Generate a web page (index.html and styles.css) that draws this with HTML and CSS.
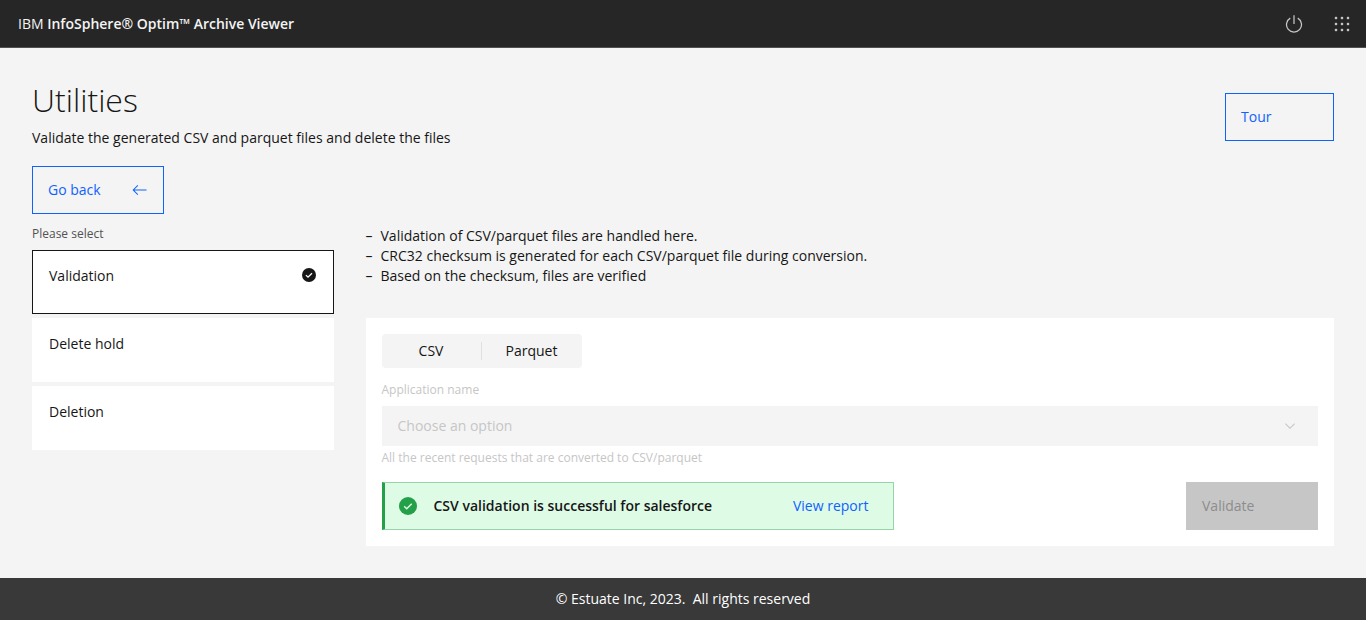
FILE: index.html
```html
<!DOCTYPE html>
<html lang="en">
<head>
<meta charset="utf-8">
<meta name="viewport" content="width=device-width, initial-scale=1">
<title>Utilities</title>
<link rel="stylesheet" href="styles.css">
</head>
<body>
<header class="topbar">
  <a class="brand" href="#">IBM <strong>InfoSphere® Optim™ Archive Viewer</strong></a>
  <div class="topbar-actions">
    <button class="icon-button" type="button" aria-label="Log out">
      <svg width="20" height="20" viewBox="0 0 32 32" fill="currentColor"><path d="M22.5 5.74l-1 1.73a11 11 0 1 1-11 0l-1-1.73a13 13 0 1 0 13 0Z"/><path d="M15 2h2v14h-2z"/></svg>
    </button>
    <button class="icon-button" type="button" aria-label="App switcher">
      <svg width="20" height="20" viewBox="0 0 20 20" fill="currentColor"><path d="M2 2h2v2H2zM8 2h2v2H8zM14 2h2v2h-2zM2 8h2v2H2zM8 8h2v2H8zM14 8h2v2h-2zM2 14h2v2H2zM8 14h2v2H8zM14 14h2v2h-2z" transform="translate(1 1)" stroke="currentColor" stroke-opacity=".35"/></svg>
    </button>
  </div>
</header>

<main class="page">
  <div class="page-head">
    <div class="page-title">
      <h1>Utilities</h1>
      <p>Validate the generated CSV and parquet files and delete the files</p>
    </div>
    <button class="button button-outline button-tour" type="button">Tour</button>
  </div>

  <button class="button button-outline button-back" type="button">
    Go back
    <svg width="16" height="16" viewBox="0 0 32 32" fill="currentColor"><path d="M14 26l1.41-1.41L7.83 17H32v-2H7.83l7.58-7.59L14 6 4 16z" transform="translate(-3 0)"/></svg>
  </button>

  <div class="columns">
    <fieldset class="tiles">
      <legend>Please select</legend>
      <label class="tile"><input type="radio" name="utility" checked><span>Validation</span>
        <svg class="tile-check" width="16" height="18" viewBox="0 0 16 18"><circle cx="8" cy="9" r="7" fill="#161616"/><path d="M4.9 9.1l2.1 2.1 4-4" fill="none" stroke="#fff" stroke-width="1.3"/></svg>
      </label>
      <label class="tile"><input type="radio" name="utility"><span>Delete hold</span></label>
      <label class="tile"><input type="radio" name="utility"><span>Deletion</span></label>
    </fieldset>

    <section class="content">
      <ul class="notes">
        <li>Validation of CSV/parquet files are handled here.</li>
        <li>CRC32 checksum is generated for each CSV/parquet file during conversion.</li>
        <li>Based on the checksum, files are verified</li>
      </ul>

      <div class="panel">
        <div class="switch">
          <button type="button">CSV</button>
          <button type="button">Parquet</button>
        </div>

        <div class="field">
          <label for="application">Application name</label>
          <div class="select-wrap">
            <select id="application" aria-describedby="application-help" disabled><option>Choose an option</option></select>
            <svg class="chevron" width="16" height="16" viewBox="0 0 16 16" fill="currentColor"><path d="M8 11L3 6l.7-.7L8 9.6l4.3-4.3.7.7z"/></svg>
          </div>
          <p id="application-help">All the recent requests that are converted to CSV/parquet</p>
        </div>

        <div class="panel-foot">
          <div class="notice" role="status">
            <svg width="20" height="20" viewBox="0 0 20 20"><circle cx="10" cy="10" r="9" fill="#24a148"/><path d="M6.2 10.2l2.5 2.5 5-5" fill="none" stroke="#defbe6" stroke-width="1.4"/></svg>
            <strong>CSV validation is successful for salesforce</strong>
            <a href="#">View report</a>
          </div>
          <button class="button button-validate" type="button" disabled>Validate</button>
        </div>
      </div>
    </section>
  </div>
</main>

<footer class="footer">© Estuate Inc, 2023. &nbsp;All rights reserved</footer>
</body>
</html>
```
FILE: styles.css
```css
*, *::before, *::after { box-sizing: border-box; }

body {
  margin: 0;
  min-height: 100vh;
  display: flex;
  flex-direction: column;
  background: #f4f4f4;
  color: #161616;
  font: 400 14px/20px "Open Sans", "Liberation Sans", sans-serif;
}

h1, p, ul, fieldset { margin: 0; padding: 0; }
button, select { font: inherit; color: inherit; }
button { cursor: pointer; }
svg { display: block; flex: none; }

.topbar {
  display: flex;
  align-items: center;
  justify-content: space-between;
  height: 48px;
  padding-left: 18px;
  background: #262626;
  border-bottom: 1px solid #525050;
}
.brand { color: #f4f4f4; text-decoration: none; }
.brand strong { font-weight: 600; }
.topbar-actions { display: flex; }
.icon-button {
  display: grid;
  place-items: center;
  width: 48px;
  height: 47px;
  padding: 0;
  border: 0;
  background: none;
  color: #c6c6c6;
}

.page { padding: 32px; }
.page-head {
  display: flex;
  align-items: center;
  justify-content: space-between;
  margin-bottom: 12px;
}
.page-title { display: grid; gap: 8px; padding-bottom: 6px; }
.page-title h1 { font-size: 32px; line-height: 40px; font-weight: 300; }

.button {
  display: flex;
  align-items: center;
  justify-content: space-between;
  height: 48px;
  padding: 0 15px;
  border: 1px solid transparent;
  text-align: left;
}
.button-outline { border-color: #0f62fe; background: transparent; color: #0f62fe; }
.button-tour { min-width: 109px; }
.button-back { min-width: 132px; }
.button-validate { min-width: 132px; background: #c6c6c6; color: #8d8d8d; }

.columns {
  display: grid;
  grid-template-columns: repeat(4, 1fr);
  gap: 32px;
  margin-top: 12px;
}

.tiles { display: flex; flex-direction: column; gap: 4px; min-width: 0; border: 0; }
.tiles legend {
  padding: 0;
  margin-bottom: 8px;
  font-size: 12px;
  line-height: 16px;
  color: #525252;
}
.tile {
  display: flex;
  align-items: flex-start;
  justify-content: space-between;
  min-height: 64px;
  padding: 15px 16px;
  border: 1px solid #fff;
  background: #fff;
  cursor: pointer;
}
.tile input { position: absolute; opacity: 0; }
.tile:has(input:checked) { border-color: #161616; }

.content { grid-column: span 3; min-width: 0; }
.notes { list-style: none; }
.notes li { display: flex; gap: 8px; }
.notes li::before { content: "–"; }

.panel { margin-top: 32px; padding: 16px; background: #fff; }

.switch {
  display: inline-grid;
  grid-template-columns: 100px 100px;
  vertical-align: top;
  padding: 8px 0;
  border-radius: 4px;
  background: #f4f4f4;
}
.switch button { height: 18px; padding: 0; border: 0; background: none; line-height: 18px; }
.switch button:first-child { border-right: 1px solid #e0e0e0; }

.field { margin: 14px 0 16px; color: #c6c6c6; font-size: 12px; line-height: 16px; }
.field label { display: block; margin-bottom: 8px; }
.field p { margin-top: 4px; }
.select-wrap { display: grid; align-items: center; }
.select-wrap > * { grid-area: 1 / 1; }
.select-wrap select {
  appearance: none;
  width: 100%;
  height: 40px;
  padding: 0 48px 0 16px;
  border: 0;
  border-radius: 0;
  background: #f4f4f4;
  color: #c6c6c6;
  font-size: 14px;
  opacity: 1;
}
.chevron { justify-self: end; margin-right: 20px; pointer-events: none; }

.panel-foot { display: flex; justify-content: space-between; gap: 16px; }
.notice {
  display: flex;
  align-items: center;
  flex: 0 1 512px;
  min-height: 48px;
  padding: 0 24px 0 13px;
  border: 1px solid #95d5a7;
  border-left: 3px solid #24a148;
  background: #defbe6;
}
.notice strong { margin-left: 16px; font-weight: 600; }
.notice a { margin-left: auto; color: #0f62fe; text-decoration: none; }

.footer {
  flex: 1 0 auto;
  display: grid;
  place-items: center;
  min-height: 42px;
  background: #393939;
  color: #fff;
  font-weight: 500;
}
```
